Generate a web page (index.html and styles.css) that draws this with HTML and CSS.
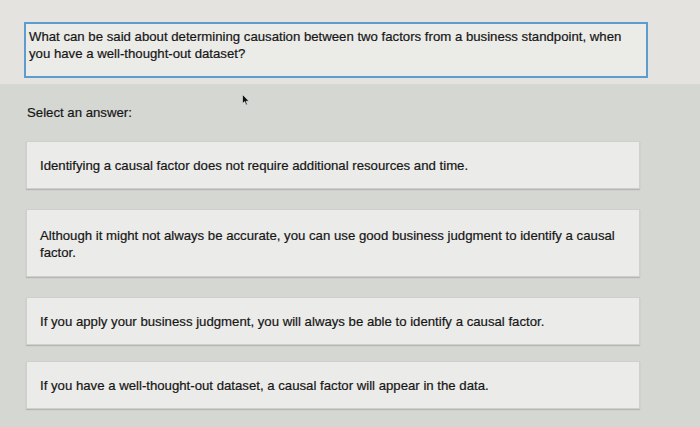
FILE: index.html
```html
<!DOCTYPE html>
<html lang="en">
  <head>
    <meta charset="UTF-8" />
    <meta name="viewport" content="width=device-width, initial-scale=1.0" />
    <title>Question</title>
    <link rel="stylesheet" href="styles.css">
  </head>
  <body>
    <div class="top">
      <div class="question">
        What can be said about determining causation between two factors from a business standpoint, when
        you have a well-thought-out dataset?
      </div>
    </div>
    <div class="answers">
      <p class="prompt">Select an answer:</p>
      <div class="option">Identifying a causal factor does not require additional resources and time.</div>
      <div class="option tall">Although it might not always be accurate, you can use good business judgment to identify a causal factor.</div>
      <div class="option">If you apply your business judgment, you will always be able to identify a causal factor.</div>
      <div class="option last">If you have a well-thought-out dataset, a causal factor will appear in the data.</div>
    </div>
    <svg class="cursor" width="8" height="12" viewBox="0 0 8 12">
      <path d="M0.5 0.5 L0.5 9.5 L2.6 7.6 L4 11 L5.4 10.4 L4 7.2 L7 7.2 Z" fill="#111" stroke="#eee" stroke-width="0.6"/>
    </svg>
  </body>
</html>
```

FILE: styles.css
```css
* {
  margin: 0;
  padding: 0;
  box-sizing: border-box;
}
body {
  position: relative;
  background: #d5d7d3;
  color: #161616;
  font-family: "Liberation Sans", Arial, sans-serif;
  height: 427px;
  overflow: hidden;
  -webkit-text-stroke: 0.2px #161616;
}
.top {
  background: #e4e3df;
  height: 84px;
  padding: 22px 52px 0 24px;
}
.question {
  border: 2px solid #5d9ccf;
  background: #ebebe8;
  height: 56px;
  padding: 4px 14px 0 3px;
  font-size: 13.2px;
  line-height: 17px;
}
.answers {
  padding: 21px 60px 0 26px;
}
.prompt {
  font-size: 13.2px;
  padding-left: 1px;
  margin-bottom: 21px;
}
.option {
  background: #ebebe9;
  border: 1px solid #cfcfcc;
  box-shadow: 0 1px 1px rgba(0, 0, 0, 0.15);
  height: 48px;
  display: flex;
  align-items: center;
  padding: 1px 12px 0 13px;
  font-size: 13.2px;
  line-height: 17px;
  margin-bottom: 20px;
}
.option.tall {
  height: 68px;
}
.option.last {
  margin-top: -4px;
}
/* mouse pointer over the page */
.cursor {
  position: absolute;
  left: 242px;
  top: 94px;
}
```
